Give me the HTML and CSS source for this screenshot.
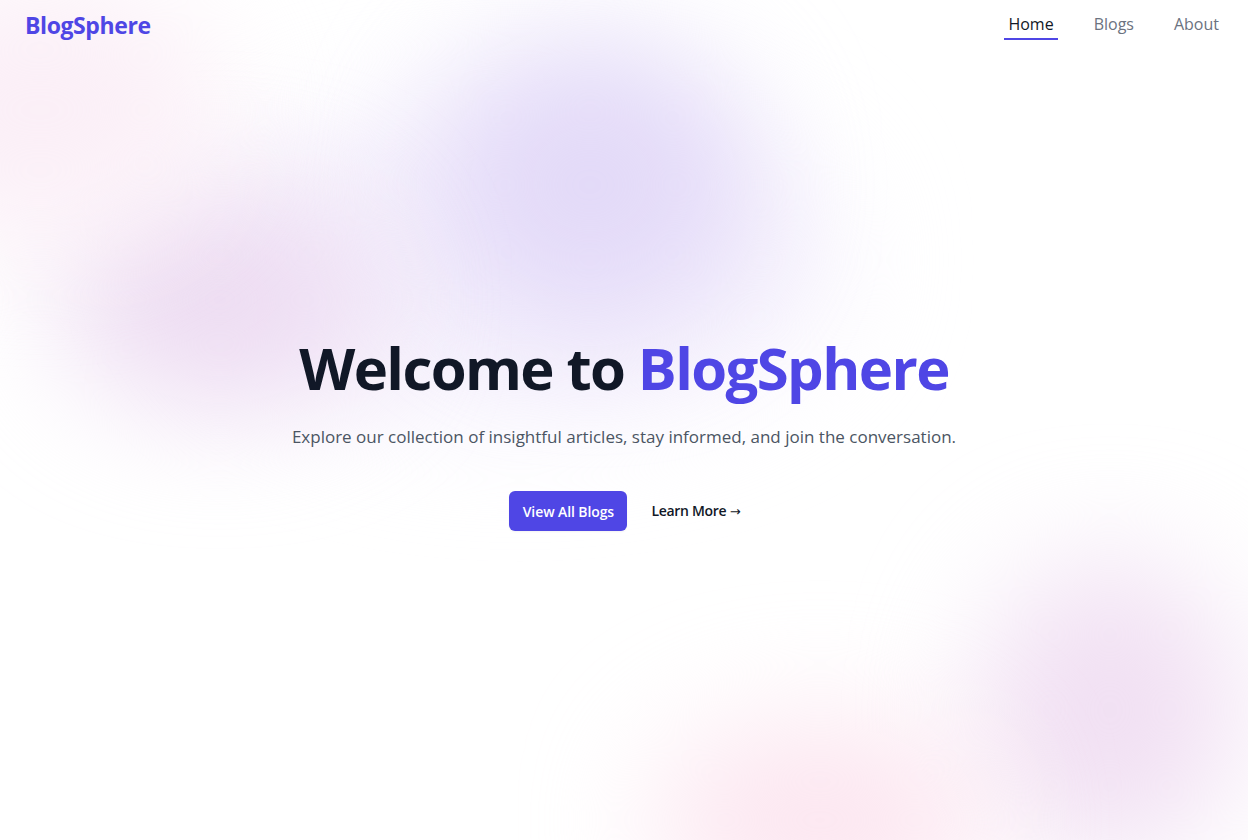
FILE: index.html
```html
<!DOCTYPE html>
<html lang="en">
<head>
<meta charset="utf-8">
<title>BlogSphere</title>
<link rel="stylesheet" href="styles.css">
</head>
<body>
<div class="page">
  <div class="bg" aria-hidden="true">
    <div class="blob b6"></div>
    <div class="blob b1"></div>
    <div class="blob b2"></div>
    <div class="blob b3"></div>
    <div class="blob b4"></div>
    <div class="blob b5"></div>
  </div>
  <header class="nav">
    <a class="logo" href="#">BlogSphere</a>
    <nav class="links">
      <a class="link active" href="#">Home</a>
      <a class="link" href="#">Blogs</a>
      <a class="link" href="#">About</a>
    </nav>
  </header>
  <main class="hero">
    <h1 class="title">Welcome to <span class="accent">BlogSphere</span></h1>
    <p class="lead">Explore our collection of insightful articles, stay informed, and join the conversation.</p>
    <div class="actions">
      <a class="btn" href="#">View All Blogs</a>
      <a class="more" href="#">Learn More <span class="arrow">→</span></a>
    </div>
  </main>
</div>
</body>
</html>
```

FILE: styles.css
```css
* { box-sizing: border-box; margin: 0; padding: 0; }
html, body { height: 100%; }
body {
  font-family: "Open Sans", "Noto Sans", sans-serif;
  background: #ffffff;
  color: #111827;
  overflow: hidden;
}
a { text-decoration: none; color: inherit; }

.page {
  position: relative;
  width: 1248px;
  height: 840px;
  overflow: hidden;
}

.bg { position: absolute; inset: 0; z-index: 0; pointer-events: none; }
.blob { position: absolute; border-radius: 50%; filter: blur(60px); }
.b1 { left: 430px; top: 40px; width: 320px; height: 290px; background: #e3daf8; }
.b2 { left: 60px; top: 190px; width: 320px; height: 220px; background: #eddcf2; }
.b3 { left: -140px; top: -20px; width: 360px; height: 260px; background: #fbeff7; }
.b4 { left: 980px; top: 560px; width: 260px; height: 300px; background: #f1e0f3; }
.b5 { left: 650px; top: 720px; width: 340px; height: 200px; background: #fce6f0; }
.b6 { left: 200px; top: 100px; width: 640px; height: 320px; background: #f6f2fd; }

.nav {
  position: relative;
  z-index: 1;
  display: flex;
  align-items: center;
  justify-content: space-between;
  padding: 6px 25px 0 25px;
  height: 50px;
}
.logo {
  font-size: 23px;
  font-weight: 700;
  color: #4f46e5;
  letter-spacing: -0.4px;
  line-height: 32px;
  margin-top: -6px;
}
.links { display: flex; gap: 32px; }
.link {
  font-size: 16px;
  font-weight: 500;
  color: #6b7280;
  padding: 0 4px 2px;
  border-bottom: 2px solid transparent;
  line-height: 24px;
  margin-top: -4px;
}
.link.active { color: #111827; border-bottom-color: #4f46e5; }

.hero {
  position: relative;
  z-index: 1;
  display: flex;
  flex-direction: column;
  align-items: center;
  text-align: center;
  padding-top: 286px;
}
.title {
  font-size: 58px;
  font-weight: 700;
  line-height: 64px;
  letter-spacing: -1.6px;
  color: #111827;
}
.accent { color: #4f46e5; }
.lead {
  margin-top: 21px;
  font-size: 17px;
  line-height: 32px;
  color: #4b5563;
}
.actions {
  margin-top: 38px;
  display: flex;
  align-items: center;
  gap: 24px;
  padding-left: 2px;
}
.btn {
  display: inline-flex;
  align-items: center;
  justify-content: center;
  width: 118px;
  height: 40px;
  border-radius: 6px;
  background: #4f46e5;
  color: #ffffff;
  font-size: 14px;
  font-weight: 600;
  letter-spacing: -0.1px;
  box-shadow: 0 1px 2px rgba(0,0,0,0.05);
}
.more {
  font-size: 14px;
  font-weight: 600;
  color: #111827;
  line-height: 24px;
  letter-spacing: -0.3px;
}
.arrow {
  font-family: "DejaVu Sans", sans-serif;
  font-weight: 400;
  font-size: 13px;
  letter-spacing: 0;
}
```
